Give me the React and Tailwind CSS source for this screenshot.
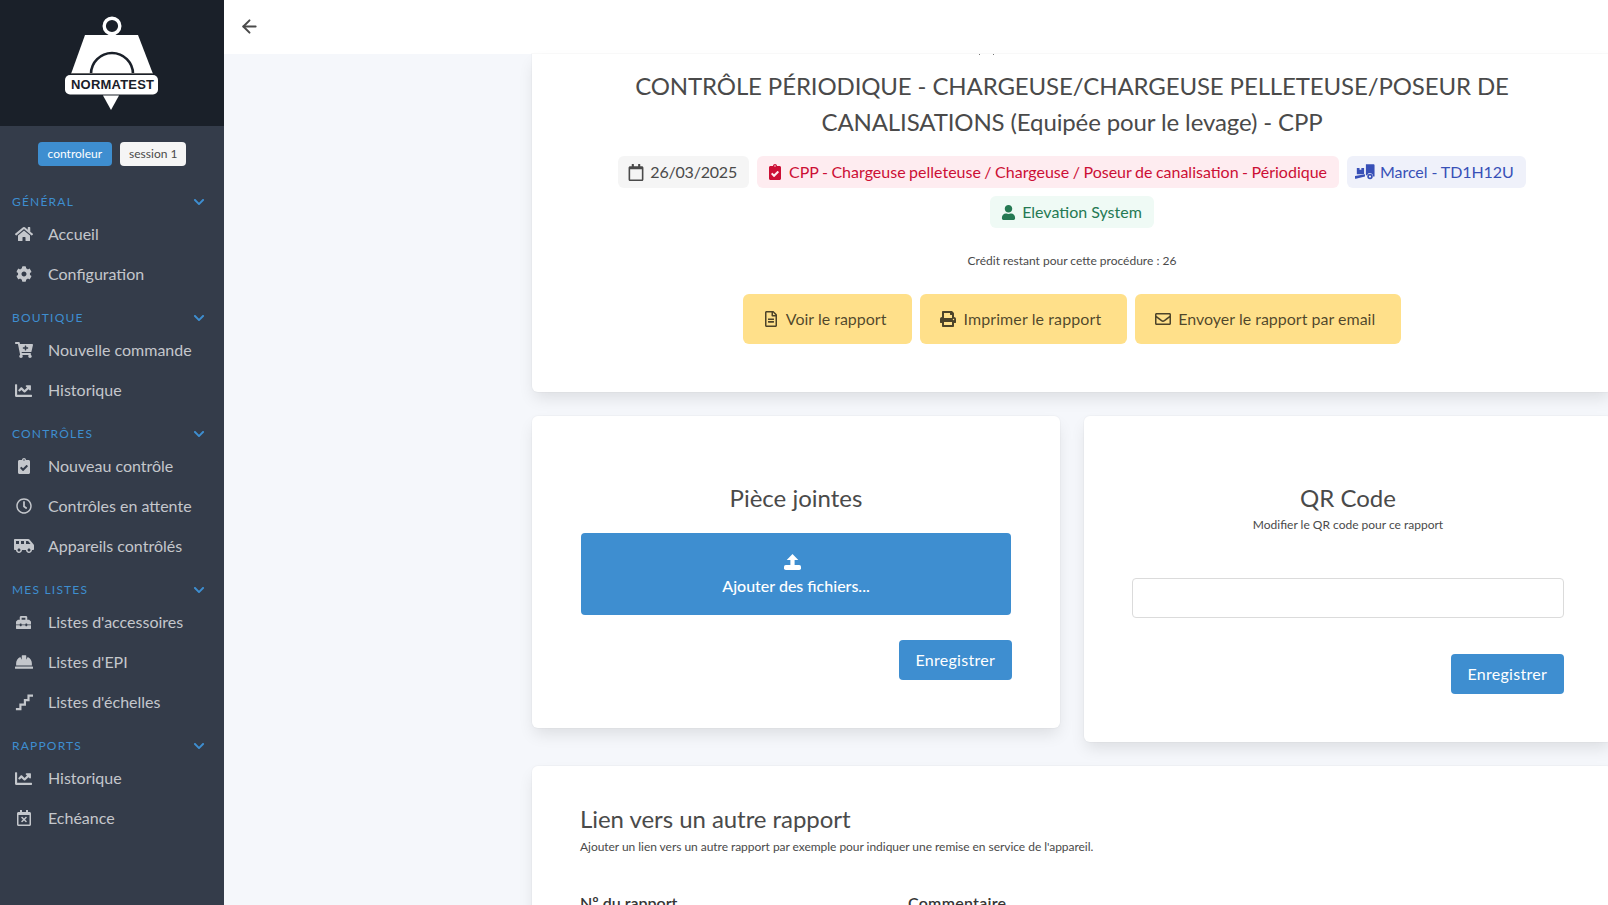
import React from "react";
import {
  FaHome,
  FaCog,
  FaCartPlus,
  FaChartLine,
  FaClipboardCheck,
  FaRegClock,
  FaShuttleVan,
  FaToolbox,
  FaHardHat,
  FaRegCalendarTimes,
  FaRegCalendar,
  FaUser,
  FaRegFileAlt,
  FaPrint,
  FaRegEnvelope,
  FaChevronDown,
} from "react-icons/fa";
import { ArrowLeft } from "lucide-react";

const Stairs = ({ className }) => (
  <svg viewBox="0 0 20 20" className={className} fill="none" stroke="currentColor" strokeWidth="2.4">
    <path d="M1 18h5v-5h5V8h4V3h5" />
  </svg>
);

const Forklift = ({ className }) => (
  <svg viewBox="0 0 22 17" className={className} fill="currentColor">
    <path d="M12 0h8.500a1 1 0 0 1 1 1v12.500h-2a3 3 0 0 0-6-1.500H12z" />
    <path d="M2 4h3v2h2V4h3v7H2z" />
    <path d="M0 13l11-2v2.500L1 16H0z" />
    <circle cx="16.500" cy="13.500" r="3" />
    <circle cx="16.500" cy="13.500" r="1.200" fill="#eff1fa" />
  </svg>
);

const Upload = ({ className }) => (
  <svg viewBox="0 0 17 16" className={className} fill="currentColor">
    <path d="M8.500 0l5.800 6h-3.700v5.500H6.400V6H2.700z" />
    <rect x="0" y="11" width="17" height="5" rx="1.800" />
  </svg>
);

const Logo = () => (
  <svg viewBox="55 10 115 105" className="h-[105px] w-[115px]">
    <circle cx="112" cy="25" r="7.800" fill="none" stroke="#fff" strokeWidth="3.400" />
    <path d="M85 34H138L153 73H71Z" fill="#fff" />
    <path d="M91 73a21 21 0 0 1 42 0" fill="#fff" stroke="#1a2029" strokeWidth="2.600" />
    <path d="M71 72.500H153" stroke="#666" strokeWidth="1" />
    <rect x="65" y="74" width="93" height="19.500" rx="5" fill="#fff" />
    <text
      x="112.500"
      y="87.500"
      textAnchor="middle"
      textLength="83"
      fontFamily="'Liberation Sans', sans-serif"
      fontWeight="700"
      fontSize="13"
      fill="#1a2029"
    >
      NORMATEST
    </text>
    <path d="M103 94.500H119L111 109Z" fill="#fff" />
  </svg>
);

const sections = [
  {
    label: "Général",
    items: [
      { icon: FaHome, text: "Accueil", size: "text-[18px]" },
      { icon: FaCog, text: "Configuration", size: "text-[16px]" },
    ],
  },
  {
    label: "Boutique",
    items: [
      { icon: FaCartPlus, text: "Nouvelle commande", size: "text-[18px]" },
      { icon: FaChartLine, text: "Historique", size: "text-[17px]" },
    ],
  },
  {
    label: "Contrôles",
    items: [
      { icon: FaClipboardCheck, text: "Nouveau contrôle", size: "text-[16px]" },
      { icon: FaRegClock, text: "Contrôles en attente", size: "text-[16px]" },
      { icon: FaShuttleVan, text: "Appareils contrôlés", size: "text-[20px]" },
    ],
  },
  {
    label: "Mes listes",
    items: [
      { icon: FaToolbox, text: "Listes d'accessoires", size: "text-[15px]" },
      { icon: FaHardHat, text: "Listes d'EPI", size: "text-[18px]" },
      { icon: Stairs, text: "Listes d'échelles", size: "h-[18px] w-[18px]" },
    ],
  },
  {
    label: "Rapports",
    items: [
      { icon: FaChartLine, text: "Historique", size: "text-[17px]" },
      { icon: FaRegCalendarTimes, text: "Echéance", size: "text-[16px]" },
    ],
  },
];

function Sidebar() {
  return (
    <aside className="flex h-full w-[224px] shrink-0 flex-col bg-[#343c4a]">
      <div className="flex h-[126px] shrink-0 items-center justify-center bg-[#1a2029]">
        <Logo />
      </div>
      <div className="flex justify-center gap-2 pt-4 pb-3 text-[12px]">
        <span className="flex h-6 items-center rounded bg-[#3e8ed0] px-[10px] text-white">controleur</span>
        <span className="flex h-6 items-center rounded bg-[#f5f5f5] px-[9px] text-[#4a4a4a]">session 1</span>
      </div>
      {sections.map((section) => (
        <div key={section.label} className="pt-3">
          <div className="flex h-6 items-center justify-between pr-[19px] pl-3 text-[12px] tracking-[1.200px] text-[#3e8ed0] uppercase">
            <span>{section.label}</span>
            <FaChevronDown className="text-[12px]" />
          </div>
          {section.items.map((item) => (
            <div key={item.text} className="flex h-10 items-center text-[16px] text-[#c4c7cc]">
              <span className="flex w-12 shrink-0 justify-center pr-[1px]">
                <item.icon className={item.size} />
              </span>
              {item.text}
            </div>
          ))}
        </div>
      ))}
    </aside>
  );
}

function Pill({ className, icon, children }) {
  return (
    <span className={`flex h-8 items-center rounded-md pr-3 text-[16px] ${className}`}>
      {icon}
      {children}
    </span>
  );
}

function ReportButton({ icon, children }) {
  return (
    <button className="flex h-[50px] items-center gap-[7px] rounded-md bg-[#ffe08a] pr-[26px] pl-5 text-[16px] text-[#000000b3]">
      <span className="flex w-4 justify-center text-[16px]">{icon}</span>
      {children}
    </button>
  );
}

function SaveButton() {
  return (
    <button className="flex h-10 items-center rounded bg-[#3e8ed0] px-[17px] text-[16px] tracking-[0.270px] text-white">
      Enregistrer
    </button>
  );
}

const cardShadow = "rounded-md bg-white shadow-[0_8px_16px_-2px_rgba(10,10,10,0.1),0_0_0_1px_rgba(10,10,10,0.02)]";

export default function App() {
  return (
    <div className="flex h-screen overflow-hidden bg-[#f5f7fb] font-['Lato',sans-serif] text-[#4a4a4a]">
      <Sidebar />
      <main className="flex h-full min-w-0 flex-1 flex-col overflow-hidden">
        <div className="flex h-[54px] shrink-0 items-center bg-white pl-[15px]">
          <ArrowLeft size={21} strokeWidth={2.3} className="mb-[2px] text-[#4a4a4a]" />
        </div>
        <div className="ml-[308px] w-[1080px] shrink-0">
          <section className={`${cardShadow} rounded-t-none px-12 pb-12`}>
            <div className="flex h-[1px] justify-center gap-[13px] pr-[172px]">
              <span className="h-[1px] w-[1px] bg-[#777]" />
              <span className="h-[1px] w-[1px] bg-[#777]" />
            </div>
            <h1 className="mt-[13px] text-center text-[24px] leading-[36px] tracking-[-0.120px]">
              CONTRÔLE PÉRIODIQUE - CHARGEUSE/CHARGEUSE PELLETEUSE/POSEUR DE CANALISATIONS (Equipée pour le levage) - CPP
            </h1>
            <div className="mt-4 flex flex-wrap justify-center gap-2">
              <Pill
                className="gap-[6px] bg-[#f5f5f5] pl-[10px] tracking-[-0.200px] text-[#4a4a4a]"
                icon={
                  <span className="flex w-4 justify-center">
                    <FaRegCalendar className="text-[17px]" />
                  </span>
                }
              >
                26/03/2025
              </Pill>
              <Pill
                className="gap-[6px] bg-[#feecf0] pl-[10px] text-[#cc0f35] [word-spacing:-0.6px]"
                icon={
                  <span className="flex w-4 justify-center">
                    <FaClipboardCheck className="text-[16px]" />
                  </span>
                }
              >
                CPP - Chargeuse pelleteuse / Chargeuse / Poseur de canalisation - Périodique
              </Pill>
              <Pill
                className="gap-[5px] bg-[#eff1fa] pl-2 tracking-[-0.080px] text-[#3850b7]"
                icon={<Forklift className="h-[16px] w-5" />}
              >
                Marcel - TD1H12U
              </Pill>
              <Pill
                className="gap-[6px] bg-[#effaf5] pl-[10px] text-[#257953]"
                icon={
                  <span className="flex w-4 justify-center">
                    <FaUser className="text-[15px]" />
                  </span>
                }
              >
                Elevation System
              </Pill>
            </div>
            <p className="mt-6 text-center text-[12px] leading-[18px]">Crédit restant pour cette procédure : 26</p>
            <div className="mt-6 flex justify-center gap-2">
              <ReportButton icon={<FaRegFileAlt />}>Voir le rapport</ReportButton>
              <ReportButton icon={<FaPrint />}>
                <span className="tracking-[0.100px]">Imprimer le rapport</span>
              </ReportButton>
              <ReportButton icon={<FaRegEnvelope />}>Envoyer le rapport par email</ReportButton>
            </div>
          </section>

          <div className="mt-6 flex items-start gap-6">
            <section className={`${cardShadow} flex h-[312px] w-[528px] flex-col px-12 pt-16`}>
              <h2 className="text-center text-[24px] leading-[36px]">Pièce jointes</h2>
              <div className="mt-[17px] ml-[1px] flex h-[82px] w-[430px] flex-col items-center justify-center rounded bg-[#3e8ed0] text-[16px] font-medium text-white">
                <Upload className="mt-1 mr-2 mb-1 h-4 w-[17px]" />
                Ajouter des fichiers...
              </div>
              <div className="mt-[25px] flex justify-end">
                <SaveButton />
              </div>
            </section>

            <section className={`${cardShadow} flex h-[326px] w-[528px] flex-col px-12 pt-16`}>
              <h2 className="text-center text-[24px] leading-[36px]">QR Code</h2>
              <p className="text-center text-[12px] leading-[18px]">Modifier le QR code pour ce rapport</p>
              <input className="mt-[44px] h-10 w-full rounded border border-[#dbdbdb] bg-white" />
              <div className="mt-9 flex justify-end">
                <SaveButton />
              </div>
            </section>
          </div>

          <section className={`${cardShadow} mt-6 px-12 pt-[38px] pb-12`}>
            <h2 className="text-[24px] leading-[30px] tracking-[-0.050px]">Lien vers un autre rapport</h2>
            <p className="mt-1 text-[12px] leading-[18px] tracking-[-0.040px]">
              Ajouter un lien vers un autre rapport par exemple pour indiquer une remise en service de l'appareil.
            </p>
            <div className="mt-[35px] flex text-[16px] leading-6 font-semibold text-[#363636]">
              <span className="w-[328px]">Nº du rapport</span>
              <span className="tracking-[0.250px]">Commentaire</span>
            </div>
          </section>
        </div>
      </main>
    </div>
  );
}
